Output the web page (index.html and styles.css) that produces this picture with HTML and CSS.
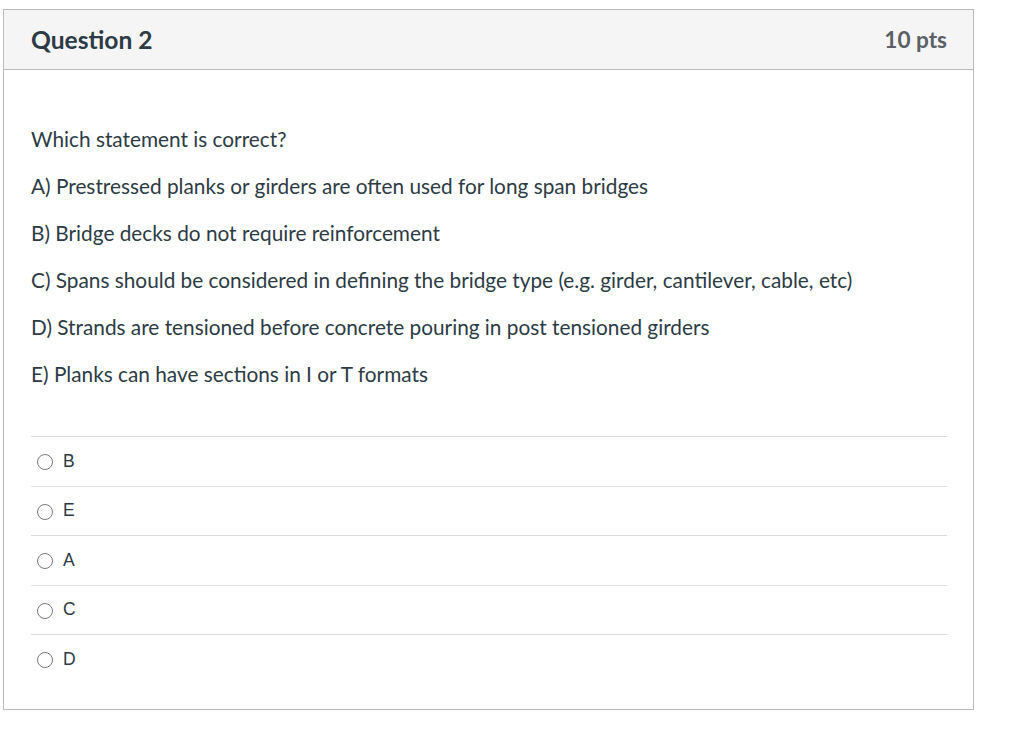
FILE: index.html
```html
<!DOCTYPE html>
<html>
<head>
<meta charset="utf-8">
<link rel="stylesheet" href="styles.css">
</head>
<body>
<div class="card">
  <div class="header">
    <span class="title">Question 2</span>
    <span class="pts">10 pts</span>
  </div>
  <div class="body">
    <div class="text">
      <p>Which statement is correct?</p>
      <p>A) Prestressed planks or girders are often used for long span bridges</p>
      <p>B) Bridge decks do not require reinforcement</p>
      <p>C) Spans should be considered in defining the bridge type (e.g. girder, cantilever, cable, etc)</p>
      <p>D) Strands are tensioned before concrete pouring in post tensioned girders</p>
      <p>E) Planks can have sections in I or T formats</p>
    </div>
    <div class="answers">
      <label class="answer"><span class="radio"></span><span class="lbl">B</span></label>
      <label class="answer"><span class="radio"></span><span class="lbl">E</span></label>
      <label class="answer"><span class="radio"></span><span class="lbl">A</span></label>
      <label class="answer"><span class="radio"></span><span class="lbl">C</span></label>
      <label class="answer"><span class="radio"></span><span class="lbl">D</span></label>
    </div>
  </div>
</div>
</body>
</html>
```
FILE: styles.css
```css
html, body {
  margin: 0;
  padding: 0;
  background: #fff;
}
body {
  font-family: Lato, "Open Sans", sans-serif;
  color: #2d3b45;
}
.card {
  margin: 9px 0 0 3px;
  width: 969px;
  border: 1px solid #b8bcbf;
}
.header {
  height: 59px;
  background: #f5f5f5;
  border-bottom: 1px solid #b8bcbf;
  display: flex;
  align-items: center;
  justify-content: space-between;
  padding: 0 26px 0 27px;
}
.title {
  font-size: 24.6px;
  font-weight: 700;
  color: #2d3b45;
}
.pts {
  font-size: 22.6px;
  font-weight: 700;
  color: #5b6166;
}
.body {
  padding: 55px 26px 25px 27px;
}
.text p {
  margin: 0 0 20px 0;
  font-size: 20.8px;
  line-height: 27px;
}
.answers {
  margin-top: 49px;
}
.answer {
  display: flex;
  align-items: center;
  height: 48.5px;
  border-top: 1px solid #dcdcdc;
  padding-left: 6px;
}
.radio {
  width: 14px;
  height: 14px;
  border: 1px solid #7a7a7a;
  border-radius: 50%;
  margin-top: 2px;
}
.lbl {
  margin-left: 10px;
  font-family: "Liberation Sans", Arial, sans-serif;
  font-size: 17.5px;
  color: #2d3b45;
}
```
